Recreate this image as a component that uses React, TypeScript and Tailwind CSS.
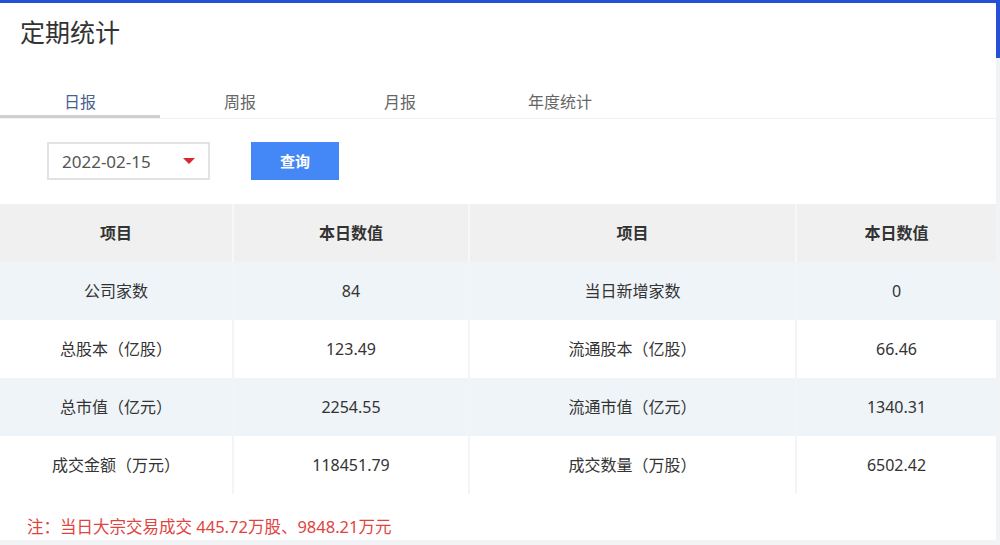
import React, { useState } from "react";

const rows = [
  ["公司家数", "84", "当日新增家数", "0"],
  ["总股本（亿股）", "123.49", "流通股本（亿股）", "66.46"],
  ["总市值（亿元）", "2254.55", "流通市值（亿元）", "1340.31"],
  ["成交金额（万元）", "118451.79", "成交数量（万股）", "6502.42"],
];

const tabs = ["日报", "周报", "月报", "年度统计"];

const App: React.FC = () => {
  const [active, setActive] = useState(0);

  return (
    <div
      className="w-[1000px] h-[545px] bg-[#f2f3f5] overflow-hidden flex flex-col"
      style={{ fontFamily: '"Noto Sans", "Noto Sans CJK SC", sans-serif' }}
    >
      <div className="h-[3px] bg-[#2451d3] shrink-0"></div>
      <div className="flex flex-1 min-h-0">
        <div className="w-[996px] h-[537px] bg-white rounded-tr-[5px] flex flex-col">
          {/* Title */}
          <div className="h-[64px] pl-[20px] pt-[11px] text-[25px] leading-[36px] text-[#333]">定期统计</div>

          {/* Tabs */}
          <div className="flex h-[52px] pt-[26px] border-b border-[#f0f2f5]">
            {tabs.map((t, i) => (
              <button
                key={t}
                onClick={() => setActive(i)}
                className={`w-[160px] h-[25px] text-[16px] leading-[18px] pb-[4px] ${
                  i === active
                    ? "text-[#4a5f8f] border-b-[3px] border-[#cfcfcf]"
                    : "text-[#666] border-b-[3px] border-transparent"
                }`}
              >
                {t}
              </button>
            ))}
          </div>

          {/* Query */}
          <div className="flex items-center h-[85px] pl-[47px] pb-[1px]">
            <div className="w-[163px] h-[38px] border-2 border-[#e3e3e3] flex items-center justify-between pl-[13px] pr-[13px]">
              <span className="text-[17px] text-[#555] pt-[1px]">2022-02-15</span>
              <svg width="12" height="6" viewBox="0 0 12 6">
                <path d="M0 0h12L6 6z" fill="#d9272e" />
              </svg>
            </div>
            <button className="ml-[41px] w-[88px] h-[38px] bg-[#4487f6] text-white text-[15px] font-semibold">查询</button>
          </div>

          {/* Table */}
          <div className="grid grid-cols-[234px_236px_327px_199px] text-[16px] text-[#333]">
            {["项目", "本日数值", "项目", "本日数值"].map((h, i) => (
              <div
                key={i}
                className={`h-[58px] flex items-center justify-center bg-[#f0f0f0] font-bold ${
                  i < 3 ? "border-r-2 border-[#f7f7f7]" : ""
                }`}
              >
                {h}
              </div>
            ))}
            {rows.map((r, ri) =>
              r.map((c, ci) => (
                <div
                  key={`${ri}-${ci}`}
                  className={`h-[58px] flex items-center justify-center ${
                    ri % 2 === 0 ? "bg-[#eff4f8]" : "bg-white"
                  } ${ci < 3 ? "border-r-2 border-[#f4f4f4]" : ""}`}
                >
                  {c}
                </div>
              ))
            )}
          </div>

          {/* Note */}
          <div className="pl-[27px] pt-[22px] text-[16.5px] leading-[22px] text-[#e0443f]">
            注：当日大宗交易成交 445.72万股、9848.21万元
          </div>
        </div>
        <div className="flex-1 flex flex-col">
          <div className="h-[55px] bg-[#2451d3]"></div>
        </div>
      </div>
    </div>
  );
};

export default App;
